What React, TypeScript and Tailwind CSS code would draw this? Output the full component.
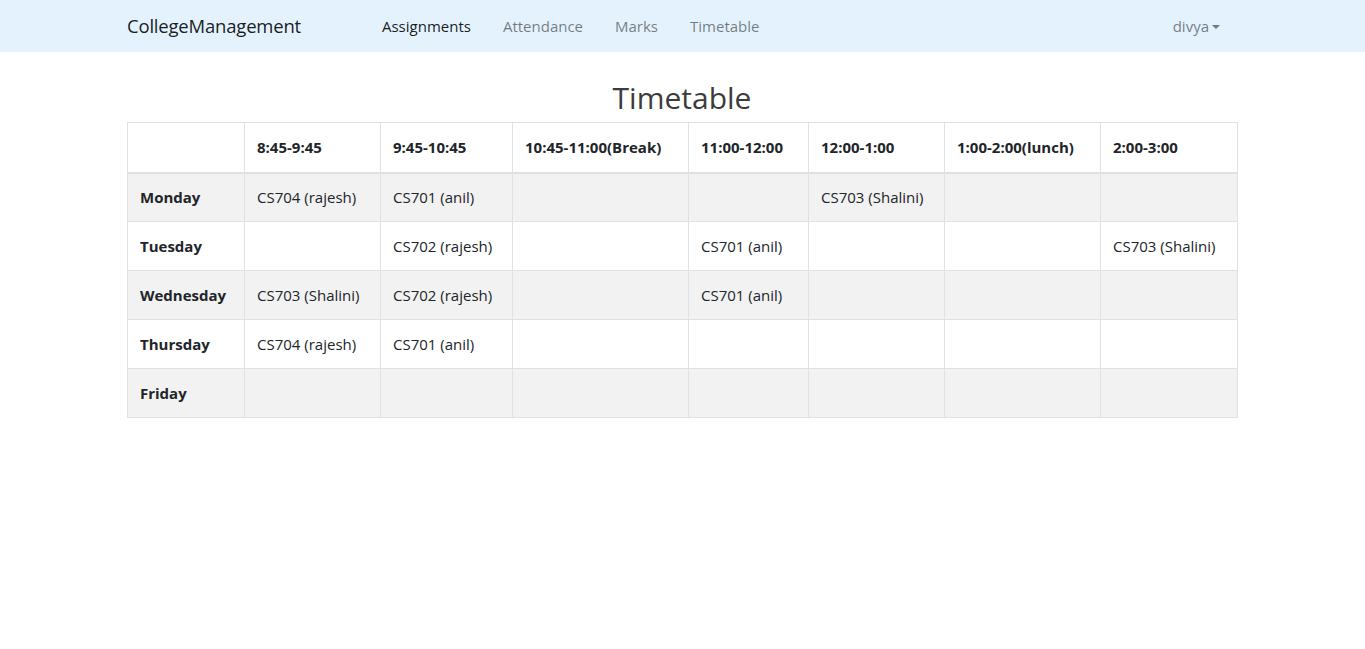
const slots = [
  { label: "8:45-9:45", w: "w-[136px]" },
  { label: "9:45-10:45", w: "w-[132px]" },
  { label: "10:45-11:00(Break)", w: "w-[176px]" },
  { label: "11:00-12:00", w: "w-[120px]" },
  { label: "12:00-1:00", w: "w-[136px]" },
  { label: "1:00-2:00(lunch)", w: "w-[156px]" },
  { label: "2:00-3:00", w: "w-[137px]" },
];

const rows: { day: string; cells: string[] }[] = [
  { day: "Monday", cells: ["CS704 (rajesh)", "CS701 (anil)", "", "", "CS703 (Shalini)", "", ""] },
  { day: "Tuesday", cells: ["", "CS702 (rajesh)", "", "CS701 (anil)", "", "", "CS703 (Shalini)"] },
  { day: "Wednesday", cells: ["CS703 (Shalini)", "CS702 (rajesh)", "", "CS701 (anil)", "", "", ""] },
  { day: "Thursday", cells: ["CS704 (rajesh)", "CS701 (anil)", "", "", "", "", ""] },
  { day: "Friday", cells: ["", "", "", "", "", "", ""] },
];

const links = ["Assignments", "Attendance", "Marks", "Timetable"];

export default function App() {
  return (
    <div className="min-h-screen bg-white text-[#212529] font-['Open_Sans',sans-serif] text-[15px]">
      <nav className="bg-[#e3f2fd] h-[52px]">
        <div className="ml-[112px] w-[1140px] px-[15px] h-full flex items-center">
          <a className="text-[18.5px] text-black/90 tracking-[-0.2px]">CollegeManagement</a>
          <ul className="flex ml-[81px] gap-[32px] text-[15px]">
            {links.map((l, i) => (
              <li key={l} className={i === 0 ? "text-black/90" : "text-black/50"}>
                {l}
              </li>
            ))}
          </ul>
          <div className="ml-auto mr-[17px] flex items-center gap-[3px] text-black/50 text-[15px]">
            divya
            <span className="w-0 h-0 border-x-[4px] border-x-transparent border-t-[4px] border-t-black/50 mt-[1px]" />
          </div>
        </div>
      </nav>

      <main className="ml-[112px] w-[1140px] px-[15px]">
        <h2 className="text-center text-[30px] text-[#3c3c3c] leading-[1.2] pt-[28px] pb-[6px]">Timetable</h2>
        <table className="table-fixed w-full border-collapse border border-[#dee2e6]">
          <thead>
            <tr>
              <th className="w-[117px] border border-[#dee2e6] border-b-2 h-[50px]" />
              {slots.map((s) => (
                <th
                  key={s.label}
                  className={`${s.w} border border-[#dee2e6] border-b-2 px-3 text-left font-bold`}
                >
                  {s.label}
                </th>
              ))}
            </tr>
          </thead>
          <tbody>
            {rows.map((r, i) => (
              <tr key={r.day} className={i % 2 === 0 ? "bg-[#f2f2f2]" : "bg-white"}>
                <td className="border border-[#dee2e6] px-3 h-[49px] font-bold">{r.day}</td>
                {r.cells.map((c, j) => (
                  <td key={j} className="border border-[#dee2e6] px-3 whitespace-nowrap">
                    {c}
                  </td>
                ))}
              </tr>
            ))}
          </tbody>
        </table>
      </main>
    </div>
  );
}
